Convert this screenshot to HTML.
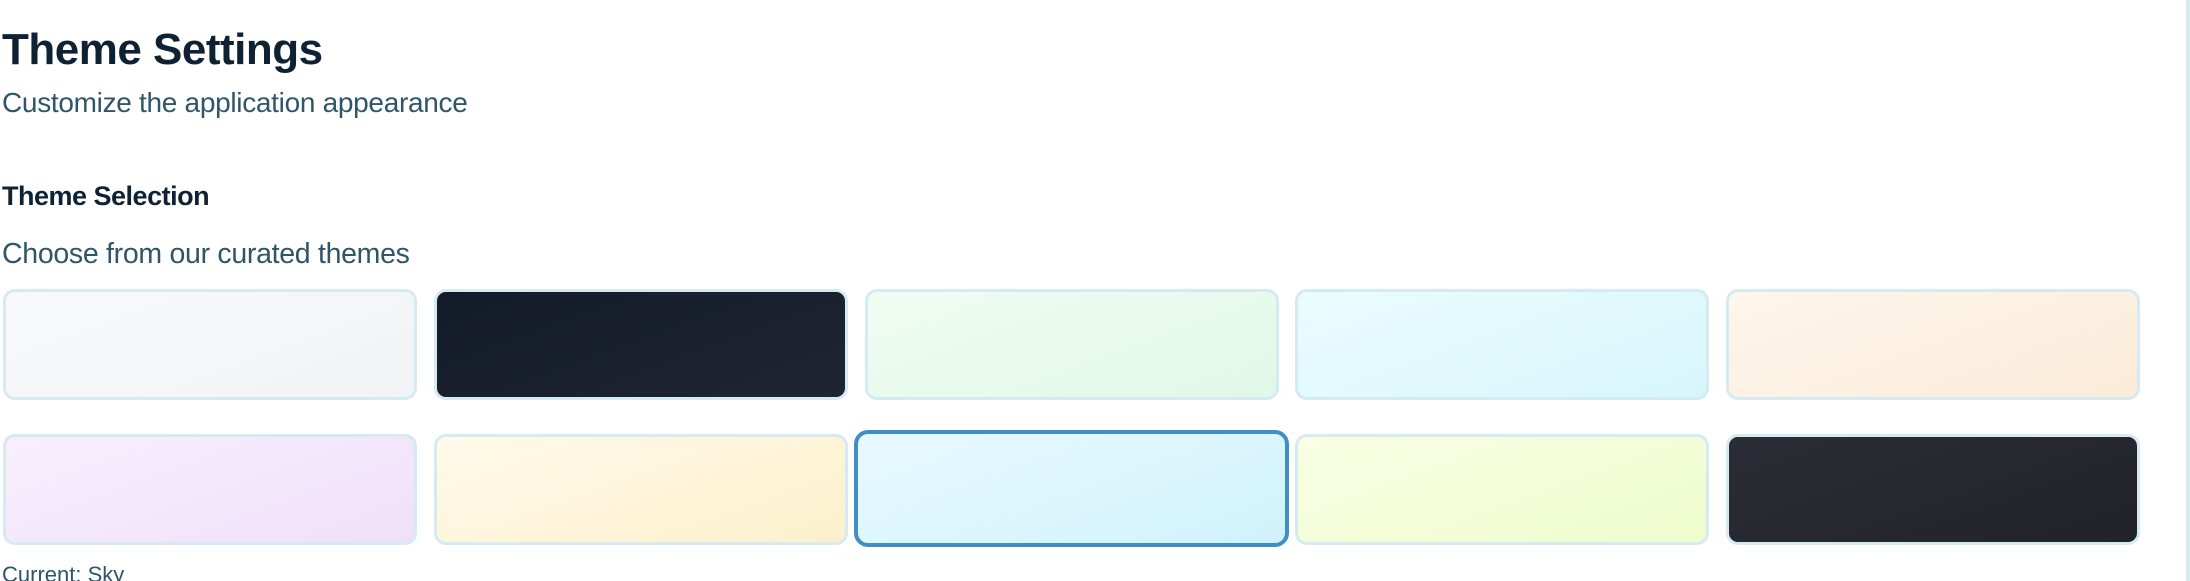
<!DOCTYPE html>
<html><head><meta charset="utf-8"><style>
html,body{margin:0;padding:0;background:#fff;width:2190px;height:581px;overflow:hidden;position:relative;font-family:"Segoe UI","Liberation Sans",sans-serif}
.t{position:absolute;left:2px;white-space:nowrap}
#h1{top:25px;font-size:44px;font-weight:600;color:#0f2233;letter-spacing:-0.5px}
#sub{top:87px;font-size:28px;color:#2f5568;letter-spacing:-0.3px}
#h2{top:181px;font-size:27px;font-weight:700;color:#0f2233;letter-spacing:-0.5px}
#ch{top:238px;font-size:28.5px;color:#2f5568;letter-spacing:-0.3px}
#cur{top:562px;font-size:22px;color:#2f5568}
.c{position:absolute;width:408px;height:105px;border:3px solid #d6eaf4;border-radius:12px;box-sizing:content-box}
.sel{border:4px solid #3f8fc6;border-radius:14px}
#rl{position:absolute;left:2186px;top:0;width:4px;height:581px;background:#d4ecef}
</style></head><body>
<div class="t" id="h1">Theme Settings</div>
<div class="t" id="sub">Customize the application appearance</div>
<div class="t" id="h2">Theme Selection</div>
<div class="t" id="ch">Choose from our curated themes</div>

<div class="c" style="left:3px;top:289px;background:linear-gradient(160deg,#f8f9fb,#f1f3f5)"></div>
<div class="c" style="left:434px;top:289px;background:linear-gradient(160deg,#131a28,#1f2533)"></div>
<div class="c" style="left:865px;top:289px;background:linear-gradient(160deg,#f0fcf3,#e0f8e7)"></div>
<div class="c" style="left:1295px;top:289px;background:linear-gradient(160deg,#ecfcfe,#d6f6fb)"></div>
<div class="c" style="left:1726px;top:289px;background:linear-gradient(160deg,#fdf6ec,#fbebd9)"></div>

<div class="c" style="left:3px;top:434px;background:linear-gradient(160deg,#f8effd,#efe0fa)"></div>
<div class="c" style="left:434px;top:434px;background:linear-gradient(160deg,#fffaea,#fcf0cc)"></div>
<div class="c sel" style="left:854px;top:430px;width:427px;height:109px;background:linear-gradient(160deg,#e8f9fe,#d0f2fb)"></div>
<div class="c" style="left:1295px;top:434px;background:linear-gradient(160deg,#f8ffe4,#eefccd)"></div>
<div class="c" style="left:1726px;top:434px;background:linear-gradient(160deg,#2a2d35,#212328)"></div>

<div class="t" id="cur">Current: Sky</div>
<div id="rl"></div>
</body></html>
